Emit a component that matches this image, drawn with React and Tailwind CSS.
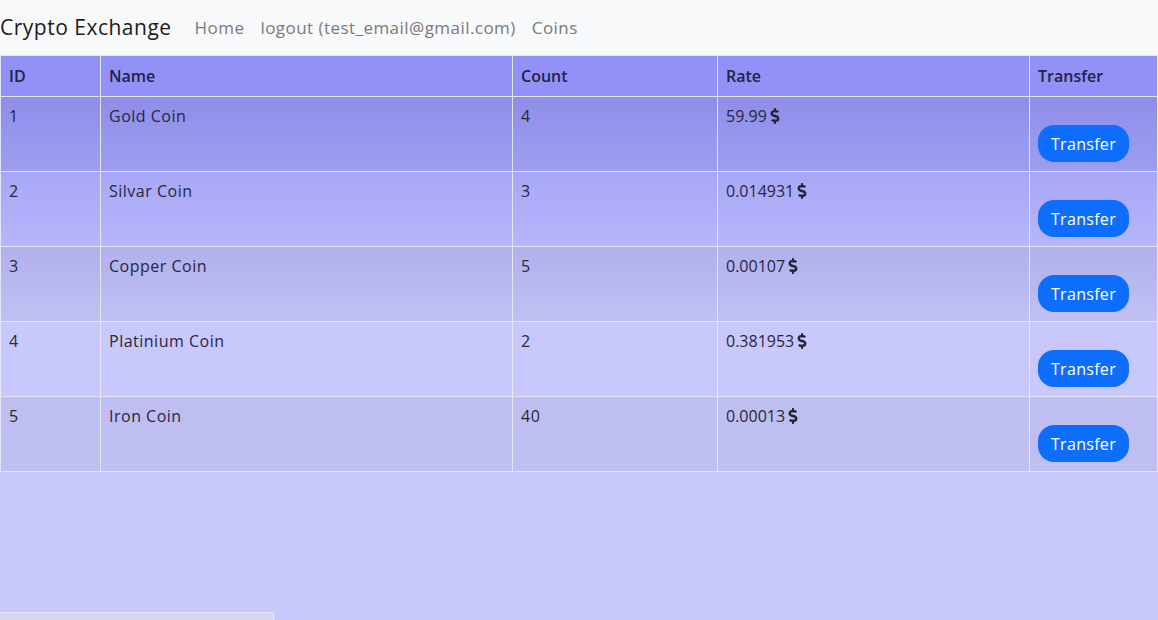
import { FaDollarSign } from 'react-icons/fa';

const coins = [
  { id: 1, name: 'Gold Coin', count: 4, rate: '59.99', bg: 'bg-gradient-to-b from-[#8e8ee9] to-[#9e9ef0]' },
  { id: 2, name: 'Silvar Coin', count: 3, rate: '0.014931', bg: 'bg-gradient-to-b from-[#a7a7f6] to-[#b6b6fb]' },
  { id: 3, name: 'Copper Coin', count: 5, rate: '0.00107', bg: 'bg-gradient-to-b from-[#b0b0ec] to-[#c1c1f2]' },
  { id: 4, name: 'Platinium Coin', count: 2, rate: '0.381953', bg: 'bg-[#c9c8fc]' },
  { id: 5, name: 'Iron Coin', count: 40, rate: '0.00013', bg: 'bg-[#bfbef0]' },
];

export default function App() {
  return (
    <div className="relative min-h-screen h-[620px] bg-[#c9c8fd] text-[#272741] overflow-hidden" style={{ fontFamily: '"Open Sans", "Noto Sans", sans-serif' }}>
      <nav className="h-[55px] bg-[#f8f9fa] flex items-center">
        <span className="text-[21px] text-[#1c1c1c] mr-[15px] tracking-[0.5px]">Crypto Exchange</span>
        <div className="flex items-center text-[17px] text-[#797a7c] tracking-[0.45px]">
          <a className="px-[8px]">Home</a>
          <a className="px-[8px]">logout (test_email@gmail.com)</a>
          <a className="px-[8px]">Coins</a>
        </div>
      </nav>

      <table className="w-full border-collapse text-[16px] tracking-[0.5px]">
        <thead>
          <tr className="bg-[#9191f8] h-[41px] text-[#232343]">
            <th className="w-[100px] border border-[#e4e4fb] px-[8px] pb-[1px] text-left font-semibold tracking-normal">ID</th>
            <th className="w-[412px] border border-[#e4e4fb] px-[8px] pb-[1px] text-left font-semibold tracking-normal">Name</th>
            <th className="w-[205px] border border-[#e4e4fb] px-[8px] pb-[1px] text-left font-semibold tracking-normal">Count</th>
            <th className="w-[312px] border border-[#e4e4fb] px-[8px] pb-[1px] text-left font-semibold tracking-normal">Rate</th>
            <th className="border border-[#e4e4fb] px-[8px] pb-[1px] text-left font-semibold tracking-normal">Transfer</th>
          </tr>
        </thead>
        <tbody>
          {coins.map((c) => (
            <tr key={c.id} className={`${c.bg} h-[75px]`}>
              <td className="border border-[#e4e4fb] px-[8px] pt-[7px] align-top">{c.id}</td>
              <td className="border border-[#e4e4fb] px-[8px] pt-[7px] align-top">{c.name}</td>
              <td className="border border-[#e4e4fb] px-[8px] pt-[7px] align-top">{c.count}</td>
              <td className="border border-[#e4e4fb] px-[8px] pt-[7px] align-top tracking-normal">
                <span className="inline-flex items-center gap-[3px]">
                  {c.rate}
                  <FaDollarSign className="w-[10px] h-[16px] text-[#25253a]" />
                </span>
              </td>
              <td className="border border-[#e4e4fb] px-[8px] pt-[8px] align-top">
                <button className="mt-[20px] h-[37px] w-[91px] rounded-[16px] bg-[#0d6efd] text-white text-[16px] tracking-[0.3px]">Transfer</button>
              </td>
            </tr>
          ))}
        </tbody>
      </table>

      <div className="absolute left-0 bottom-0 h-[8px] w-[274px] bg-[#d6d6f4] border-t border-r border-[#e6e6f8] rounded-tr-[3px]" />
    </div>
  );
}
